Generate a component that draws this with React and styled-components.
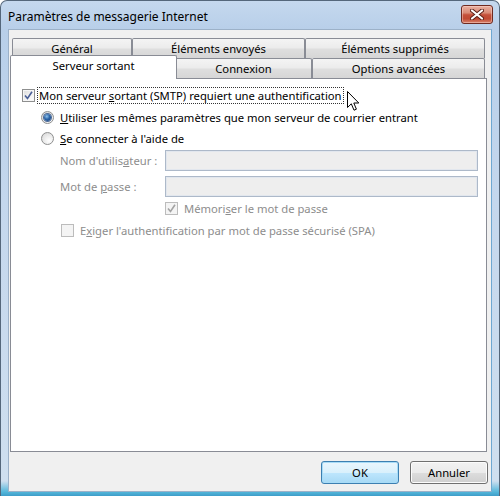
import React from 'react';
import styled, { createGlobalStyle } from 'styled-components';

// Global

const GlobalStyle = createGlobalStyle`
  html, body {
    margin: 0;
    padding: 0;
    background: #ffffff;
  }
  * {
    box-sizing: border-box;
  }
  body {
    font-family: 'Segoe UI', 'Noto Sans', 'Liberation Sans', sans-serif;
    font-size: 11.25px;
    color: #000000;
  }
`;

// Window frame

const Window = styled.div`
  width: 500px;
  height: 496px;
  display: flex;
  flex-direction: column;
  padding: 0 7px 4px 7px;
  border: 1px solid #55677b;
  border-bottom: none;
  border-radius: 7px 7px 0 0;
  background: linear-gradient(to bottom, #c5d8ee 0, #b8cfe9 28px, #c4d7ed 200px, #cfdfef 480px, #52b6da 491px, #3a97c4 496px);
`;

const TitleBar = styled.div`
  height: 28px;
  display: flex;
  justify-content: space-between;
  align-items: flex-start;
`;

const Title = styled.span`
  margin-top: 7px;
  font-size: 12px;
  color: #000000;
`;

const CloseButton = styled.div`
  width: 32px;
  height: 19px;
  margin-top: 4px;
  margin-right: -1px;
  display: flex;
  align-items: center;
  justify-content: center;
  border: 1px solid #6f2a20;
  border-radius: 3px;
  background: linear-gradient(to bottom, #eab0a2 0%, #d98b76 40%, #c5503a 52%, #c04a33 75%, #d8826a 100%);
  box-shadow: inset 0 0 0 1px rgba(255, 220, 210, 0.45);
`;

const Client = styled.div`
  flex: 1;
  display: flex;
  flex-direction: column;
  border: 1px solid #9cb1c8;
  border-right-color: #6fa8d2;
  background: #f0f0f0;
`;

// Tabs

const TabStrip = styled.div`
  display: flex;
  flex-direction: column;
  margin-top: 8px;
  padding-left: 3px;
`;

const TabRow = styled.div`
  display: flex;
  height: 20px;
`;

const Tab = styled.div`
  width: ${(p) => p.$w}px;
  height: 20px;
  display: flex;
  align-items: center;
  justify-content: center;
  padding-bottom: 1px;
  border: 1px solid #898c95;
  border-bottom: none;
  border-radius: 2px 2px 0 0;
  background: linear-gradient(to bottom, #f4f4f4 0%, #ececec 45%, #dedede 55%, #d6d6d6 100%);
  white-space: nowrap;
`;

const SelectedTab = styled(Tab)`
  position: relative;
  z-index: 1;
  width: ${(p) => p.$w + 4}px;
  height: 24px;
  margin: -3px -2px -1px -2px;
  padding-bottom: 5px;
  background: #ffffff;
`;

const Panel = styled.div`
  width: 477px;
  height: 374px;
  margin-left: 1px;
  display: flex;
  flex-direction: column;
  padding: 5px 0 0 11px;
  border: 1px solid #898c95;
  background: #ffffff;
  position: relative;
`;

// Rows

const Row = styled.div`
  height: ${(p) => p.$h || 22}px;
  margin-top: ${(p) => p.$mt || 0}px;
  padding-left: ${(p) => p.$indent || 0}px;
  display: flex;
  align-items: center;
  white-space: nowrap;
  color: ${(p) => (p.$disabled ? '#8d8d8d' : '#000000')};
`;

const FieldLabel = styled.span`
  width: 105px;
`;

const TextBox = styled.div`
  width: 313px;
  height: 21px;
  border: 1px solid #adb9c9;
  box-shadow: inset 0 0 0 1px #e2e7ee;
  background: #eeeeee;
`;

const Label = styled.span`
  margin-left: ${(p) => p.$ml ?? 4}px;
  padding: 0 1px;
  line-height: 15px;
  border: 1px dotted ${(p) => (p.$focus ? '#333333' : 'transparent')};
`;

const Box = styled.span`
  width: 13px;
  height: 13px;
  flex: none;
  display: flex;
  align-items: center;
  justify-content: center;
  border: 1px solid ${(p) => (p.$disabled ? '#bcbcbc' : '#8e8f8f')};
  background: ${(p) =>
    p.$disabled
      ? '#f4f4f4'
      : 'linear-gradient(135deg, #dcdcdc 0%, #f0f0f0 50%, #ffffff 100%)'};
  box-shadow: inset 0 0 0 1px ${(p) => (p.$disabled ? '#f4f4f4' : '#f6f6f6')};
`;

const Radio = styled.span`
  width: 13px;
  height: 13px;
  flex: none;
  border-radius: 50%;
  display: flex;
  align-items: center;
  justify-content: center;
  border: 1px solid #8e8f8f;
  background: radial-gradient(circle at 65% 70%, #ffffff 0%, #e6e6e6 60%, #d0d0d0 100%);
`;

const RadioDot = styled.span`
  width: 7px;
  height: 7px;
  border-radius: 50%;
  background: radial-gradient(circle at 40% 35%, #8fc3ec 0%, #2b64a8 45%, #173e74 100%);
  box-shadow: 0 0 0 1px #4d6a96;
`;

// Bottom buttons

const ButtonBar = styled.div`
  display: flex;
  justify-content: flex-end;
  gap: 11px;
  margin-top: 9px;
  padding-right: 3px;
`;

const Button = styled.div`
  width: 78px;
  height: 23px;
  display: flex;
  align-items: center;
  justify-content: center;
  border: 1px solid ${(p) => (p.$default ? '#3c7fb1' : '#707070')};
  border-radius: 3px;
  background: ${(p) =>
    p.$default
      ? 'linear-gradient(to bottom, #eaf6fd 0%, #d9f0fc 50%, #bee6fd 51%, #a7d9f5 100%)'
      : 'linear-gradient(to bottom, #f2f2f2 0%, #ebebeb 50%, #dddddd 51%, #cfcfcf 100%)'};
  box-shadow: inset 0 0 0 1px ${(p) => (p.$default ? '#a8dcf7' : '#fcfcfc')};
`;

const Cursor = styled.svg`
  position: absolute;
  left: 336px;
  top: 12px;
`;

function Check({ disabled }) {
  return (
    <svg width="9" height="9" viewBox="0 0 9 9">
      <path
        d="M1 4.5 L3.5 7.5 L8 0.8"
        fill="none"
        stroke={disabled ? '#a3a3a3' : '#4a5f97'}
        strokeWidth="1.6"
      />
    </svg>
  );
}

function CloseGlyph() {
  return (
    <svg width="14" height="11" viewBox="0 0 14 11">
      <path d="M2 1.5 L12 9.5 M12 1.5 L2 9.5" stroke="#5a1e16" strokeWidth="4" strokeLinecap="round" />
      <path d="M2 1.5 L12 9.5 M12 1.5 L2 9.5" stroke="#ffffff" strokeWidth="2.2" strokeLinecap="round" />
    </svg>
  );
}

function App() {
  return (
    <>
      <GlobalStyle />
      <Window>
        <TitleBar>
          <Title>Paramètres de messagerie Internet</Title>
          <CloseButton>
            <CloseGlyph />
          </CloseButton>
        </TitleBar>
        <Client>
          <TabStrip>
            <TabRow>
              <Tab $w={120}>Général</Tab>
              <Tab $w={173}>Éléments envoyés</Tab>
              <Tab $w={180}>Éléments supprimés</Tab>
            </TabRow>
            <TabRow>
              <SelectedTab $w={163}>Serveur sortant</SelectedTab>
              <Tab $w={137}>Connexion</Tab>
              <Tab $w={173}>Options avancées</Tab>
            </TabRow>
          </TabStrip>
          <Panel>
            <Row>
              <Box>
                <Check />
              </Box>
              <Label $ml={2} $focus>
                Mon serveur <u>s</u>ortant (SMTP) requiert une authentification
              </Label>
            </Row>
            <Row $indent={19}>
              <Radio>
                <RadioDot />
              </Radio>
              <Label>
                <u>U</u>tiliser les mêmes paramètres que mon serveur de courrier entrant
              </Label>
            </Row>
            <Row $indent={19} $h={21}>
              <Radio />
              <Label>
                <u>S</u>e connecter à l'aide de
              </Label>
            </Row>
            <Row $indent={38} $h={21} $mt={1} $disabled>
              <FieldLabel>
                Nom d'utilis<u>a</u>teur :
              </FieldLabel>
              <TextBox />
            </Row>
            <Row $indent={38} $h={21} $mt={5} $disabled>
              <FieldLabel>
                Mot de <u>p</u>asse :
              </FieldLabel>
              <TextBox />
            </Row>
            <Row $indent={143} $disabled>
              <Box $disabled>
                <Check disabled />
              </Box>
              <Label>
                Mémori<u>s</u>er le mot de passe
              </Label>
            </Row>
            <Row $indent={39} $disabled>
              <Box $disabled />
              <Label>
                E<u>x</u>iger l'authentification par mot de passe sécurisé (SPA)
              </Label>
            </Row>
            <Cursor width="13" height="21" viewBox="0 0 13 21">
              <path
                d="M0.5 0.5 L0.5 16.5 L4.3 12.8 L7 19.2 L9.4 18.2 L6.8 12 L11.8 12 Z"
                fill="#ffffff"
                stroke="#000000"
                strokeWidth="1"
                strokeLinejoin="round"
              />
            </Cursor>
          </Panel>
          <ButtonBar>
            <Button $default>OK</Button>
            <Button>Annuler</Button>
          </ButtonBar>
        </Client>
      </Window>
    </>
  );
}

export default App;
